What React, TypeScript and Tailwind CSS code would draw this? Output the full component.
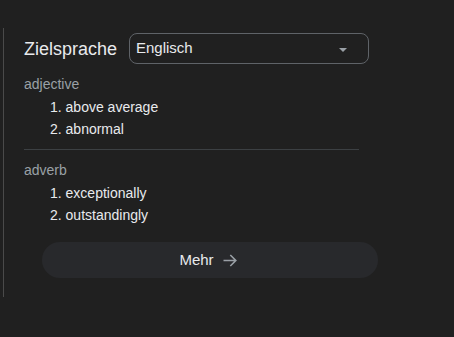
import React from "react";

export default function App() {
  return (
    <div
      className="w-[454px] h-[337px] bg-[#202020] pt-[28px] pl-[3px]"
      style={{ fontFamily: '"Liberation Sans", Arial, sans-serif' }}
    >
      <div className="border-l border-[#4a4a4a] h-[269px] pl-[20px] pt-[5px]">
        <div className="flex items-center h-[31px]">
          <span className="text-[18px] leading-[22px] text-[#e8eaed] w-[105px]">Zielsprache</span>
          <div className="w-[240px] h-[31px] border border-[#5f6368] rounded-[8px] flex items-center justify-between pl-[6px] pr-[21px]">
            <span className="text-[15px] text-[#e8eaed]">Englisch</span>
            <svg width="8" height="4" viewBox="0 0 8 4" className="mt-[2px]">
              <path d="M0 0 H8 L4 4 Z" fill="#9aa0a6" />
            </svg>
          </div>
        </div>
        <div className="mt-[10px] text-[14px] leading-[20px] text-[#9aa0a6]">adjective</div>
        <div className="mt-[2px] pl-[26px] text-[14px] leading-[22px] text-[#e8eaed]">
          <div>1. above average</div>
          <div>2. abnormal</div>
        </div>
        <div className="mt-[9px] w-[335px] h-px bg-[#3c4043]" />
        <div className="mt-[10px] text-[14px] leading-[20px] text-[#9aa0a6]">adverb</div>
        <div className="mt-[2px] pl-[26px] text-[14px] leading-[22px] text-[#e8eaed]">
          <div>1. exceptionally</div>
          <div>2. outstandingly</div>
        </div>
        <div className="mt-[16px] ml-[18px] w-[336px] h-[36px] rounded-full bg-[#28292c] flex items-center justify-center gap-[9px] pr-[4px]">
          <span className="text-[15px] text-[#e8eaed]">Mehr</span>
          <svg width="14" height="13" viewBox="0 0 14 13" fill="none">
            <path d="M0.5 6.5 H12.8 M7.3 1 L12.8 6.5 L7.3 12" stroke="#9aa0a6" strokeWidth="1.6" />
          </svg>
        </div>
      </div>
    </div>
  );
}
